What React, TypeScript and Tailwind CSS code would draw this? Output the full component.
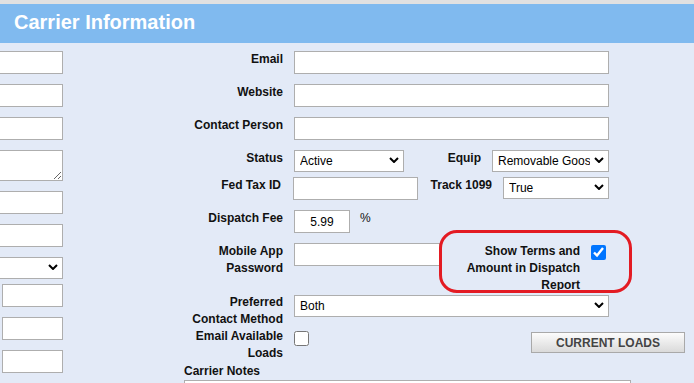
import React from "react";

function Chevron() {
  return (
    <svg
      width="10"
      height="6"
      viewBox="0 0 10 6"
      className="pointer-events-none absolute right-[5px] top-[7px]"
    >
      <path d="M1 1 L5 5 L9 1" fill="none" stroke="#000" strokeWidth="2" />
    </svg>
  );
}

function Select({ w, value, extra = "" }: { w: string; value: string; extra?: string }) {
  return (
    <div className={`relative h-[22px] shrink-0 ${w}`}>
      <select
        defaultValue={value}
        className={`h-full w-full appearance-none border border-[#aeaeae] bg-white pl-[5px] pr-[18px] text-[12px] text-black outline-none ${extra}`}
      >
        <option>{value}</option>
      </select>
      <Chevron />
    </div>
  );
}

function Label({ children, extra = "pt-[2px]" }: { children: React.ReactNode; extra?: string }) {
  return (
    <div className={`w-[99px] shrink-0 text-right font-bold leading-[17px] text-[#111] ${extra}`}>
      {children}
    </div>
  );
}

const inputCls = "h-[23px] border border-[#aeaeae] bg-white px-[4px] text-[12px] text-black outline-none";

export default function App() {
  return (
    <div className="h-[383px] w-[694px] overflow-hidden bg-[#e3eaf7] font-['Liberation_Sans',Arial,sans-serif] text-[12px]">
      <div className="h-[4px] bg-[#e1e1e1]" />
      <div className="h-[39px] bg-[#80baef] pl-[14px] pt-[7px] text-[20px] font-bold leading-[23px] text-white">
        Carrier Information
      </div>
      <div className="flex">
        {/* left column (cut off) */}
        <div className="flex w-[63px] shrink-0 flex-col pt-[8px]">
          <input className={`${inputCls} mb-[10px] w-full border-l-0`} />
          <input className={`${inputCls} mb-[10px] w-full border-l-0`} />
          <input className={`${inputCls} mb-[10px] w-full border-l-0`} />
          <textarea className="mb-[10px] h-[31px] w-full border border-l-0 border-[#aeaeae] bg-white outline-none" />
          <input className={`${inputCls} mb-[10px] w-full border-l-0`} />
          <input className={`${inputCls} mb-[10px] w-full border-l-0`} />
          <div className="mb-[5px]">
            <Select w="w-[63px]" value="" extra="border-l-0" />
          </div>
          <input className={`${inputCls} mb-[10px] ml-[2px] w-[61px]`} />
          <input className={`${inputCls} mb-[10px] ml-[2px] w-[61px]`} />
          <input className={`${inputCls} mb-[10px] ml-[2px] w-[61px]`} />
        </div>

        {/* middle form */}
        <div className="ml-[121px] flex-1 pt-[6px]">
          <div className="flex h-[33px] items-start">
            <Label>Email</Label>
            <input className={`${inputCls} ml-[11px] mt-[2px] w-[315px]`} />
          </div>
          <div className="flex h-[33px] items-start">
            <Label>Website</Label>
            <input className={`${inputCls} ml-[11px] mt-[2px] w-[315px]`} />
          </div>
          <div className="flex h-[33px] items-start">
            <Label>Contact Person</Label>
            <input className={`${inputCls} ml-[11px] mt-[2px] w-[315px]`} />
          </div>
          <div className="flex h-[27px] items-start">
            <Label>Status</Label>
            <div className="ml-[11px] flex w-[315px] items-start">
              <div className="mt-[2px]">
                <Select w="w-[110px]" value="Active" />
              </div>
              <div className="flex-1" />
              <div className="pt-[2px] font-bold leading-[17px] text-[#111]">Equip</div>
              <div className="ml-[11px] mt-[2px]">
                <Select w="w-[117px]" value="Removable Gooseneck" />
              </div>
            </div>
          </div>
          <div className="flex h-[33px] items-start">
            <Label extra="pt-[2px] pr-[2px]">Fed Tax ID</Label>
            <div className="ml-[11px] flex w-[315px] items-start">
              <input className={`${inputCls} -ml-px mt-[2px] w-[125px]`} />
              <div className="flex-1" />
              <div className="pt-[2px] font-bold leading-[17px] text-[#111]">Track 1099</div>
              <div className="ml-[11px] mt-[2px]">
                <Select w="w-[106px]" value="True" />
              </div>
            </div>
          </div>
          <div className="flex h-[33px] items-start">
            <Label>Dispatch Fee</Label>
            <input defaultValue="5.99" className={`${inputCls} ml-[11px] mt-[2px] w-[56px] text-center`} />
            <div className="ml-[10px] pt-[2px] leading-[17px] text-[#111]">%</div>
          </div>
          <div className="relative flex h-[52px] items-start">
            <Label>Mobile App Password</Label>
            <div className="ml-[11px] flex w-[315px] items-start">
              <input className={`${inputCls} mt-[2px] w-[146px]`} />
              <div className="flex-1" />
              <div className="w-[120px] pt-[2px] text-right font-bold leading-[17px] text-[#111]">
                Show Terms and Amount in Dispatch Report
              </div>
              <input type="checkbox" defaultChecked className="ml-[11px] mr-[3px] mt-[4px] h-[15px] w-[15px]" />
            </div>
            <div className="pointer-events-none absolute left-[255px] top-[-11px] h-[63px] w-[193px] rounded-[18px] border-[3px] border-[#e31b23]" />
          </div>
          <div className="flex h-[34px] items-start">
            <Label extra="pt-[1px]">Preferred Contact Method</Label>
            <div className="ml-[11px] mt-[2px]">
              <Select w="w-[315px]" value="Both" />
            </div>
          </div>
          <div className="flex h-[36px] items-start">
            <Label extra="pt-[1px]">Email Available Loads</Label>
            <input type="checkbox" className="ml-[11px] mt-[4px] h-[15px] w-[15px]" />
            <div className="flex-1" />
            <button className="mr-[9px] mt-[5px] h-[21px] w-[154px] border border-[#a9a9a9] bg-linear-to-b from-[#fcfcfc] to-[#dadada] text-[12px] font-bold text-[#444]">
              CURRENT LOADS
            </button>
          </div>
          <div className="font-bold leading-[17px] text-[#111]">Carrier Notes</div>
          <textarea className="h-[40px] w-[447px] border border-[#aeaeae] bg-white outline-none" />
        </div>
      </div>
    </div>
  );
}
